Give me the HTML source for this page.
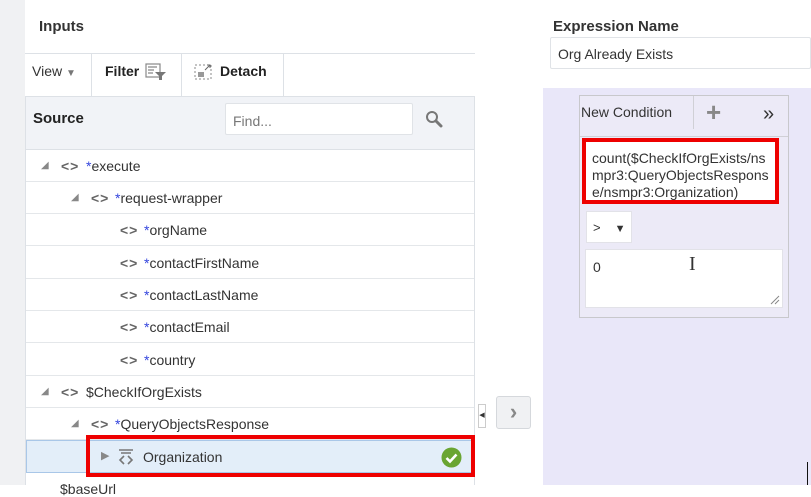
<!DOCTYPE html>
<html><head><meta charset="utf-8"><style>
*{margin:0;padding:0;box-sizing:border-box}
body{width:811px;height:485px;overflow:hidden;background:#fff;font-family:"Liberation Sans",Arial,sans-serif;color:#333;position:relative}
.a{position:absolute}
.row{position:absolute;left:26px;width:448px;height:32px;border-bottom:1px solid #e4e7ea;font-size:14px;line-height:32px;color:#333}
.row span{position:absolute;white-space:nowrap}
.tri{color:#888;font-size:10px}
.ic{color:#666;font-size:14px;letter-spacing:1px;font-weight:bold}
.st{color:#3344dd}
</style></head><body>
<div class="a" style="left:0;top:0;width:25px;height:485px;background:#f0f1f3"></div>
<div class="a" style="left:39px;top:18px;font-size:15px;font-weight:bold;color:#333">Inputs</div>
<div class="a" style="left:25px;top:53px;width:450px;height:1px;background:#dde1e6"></div>
<div class="a" style="left:32px;top:63px;font-size:14px;color:#333">View <span style="font-size:10px;color:#777">▼</span></div>
<div class="a" style="left:91px;top:54px;width:1px;height:42px;background:#dde1e6"></div>
<div class="a" style="left:105px;top:63px;font-size:14px;font-weight:bold;color:#222">Filter</div>
<svg class="a" style="left:145px;top:63px" width="22" height="18" viewBox="0 0 22 18"><g stroke="#888" fill="none" stroke-width="1.2"><rect x="1" y="1" width="14" height="13"/><path d="M3 4h9M3 7h6M3 10h5"/></g><path d="M10 9h11l-4 4v4h-3v-4z" fill="#777"/></svg>
<div class="a" style="left:181px;top:54px;width:1px;height:42px;background:#dde1e6"></div>
<svg class="a" style="left:194px;top:63px" width="20" height="18" viewBox="0 0 20 18"><rect x="1" y="2" width="16" height="14" fill="none" stroke="#888" stroke-dasharray="2 2"/><rect x="4" y="9" width="6" height="5" fill="#999"/><path d="M11 7l5-5M13 2h3v3" stroke="#666" fill="none"/></svg>
<div class="a" style="left:220px;top:63px;font-size:14px;font-weight:bold;color:#222">Detach</div>
<div class="a" style="left:283px;top:54px;width:1px;height:42px;background:#dde1e6"></div>
<div class="a" style="left:25px;top:96px;width:450px;height:389px;border:1px solid #dde1e6;border-bottom:none"></div>
<div class="a" style="left:26px;top:97px;width:448px;height:53px;background:#f1f3f7;border-bottom:1px solid #dde1e6"></div>
<div class="a" style="left:33px;top:110px;font-size:15px;font-weight:bold;color:#222">Source</div>
<div class="a" style="left:225px;top:103px;width:188px;height:32px;background:#fff;border:1px solid #e0e3e7;border-radius:2px;font-size:14px;color:#777;padding:9px 0 0 7px">Find...</div>
<svg class="a" style="left:425px;top:110px" width="18" height="18" viewBox="0 0 18 18"><circle cx="7" cy="7" r="5" fill="none" stroke="#777" stroke-width="2"/><path d="M11 11l5 5" stroke="#777" stroke-width="3" stroke-linecap="round"/></svg>

<div class="row" style="top:150px"><span class="tri" style="left:15px">◢</span><span class="ic" style="left:35px">&lt;&gt;</span><span style="left:60px"><span class="st" style="position:static">*</span>execute</span></div>
<div class="row" style="top:182px"><span class="tri" style="left:45px">◢</span><span class="ic" style="left:65px">&lt;&gt;</span><span style="left:89px"><span class="st" style="position:static">*</span>request-wrapper</span></div>
<div class="row" style="top:214px"><span class="ic" style="left:94px">&lt;&gt;</span><span style="left:118px"><span class="st" style="position:static">*</span>orgName</span></div>
<div class="row" style="top:247px"><span class="ic" style="left:94px">&lt;&gt;</span><span style="left:118px"><span class="st" style="position:static">*</span>contactFirstName</span></div>
<div class="row" style="top:279px"><span class="ic" style="left:94px">&lt;&gt;</span><span style="left:118px"><span class="st" style="position:static">*</span>contactLastName</span></div>
<div class="row" style="top:311px"><span class="ic" style="left:94px">&lt;&gt;</span><span style="left:118px"><span class="st" style="position:static">*</span>contactEmail</span></div>
<div class="row" style="top:344px"><span class="ic" style="left:94px">&lt;&gt;</span><span style="left:118px"><span class="st" style="position:static">*</span>country</span></div>
<div class="row" style="top:376px"><span class="tri" style="left:15px">◢</span><span class="ic" style="left:35px">&lt;&gt;</span><span style="left:60px">$CheckIfOrgExists</span></div>
<div class="row" style="top:408px"><span class="tri" style="left:45px">◢</span><span class="ic" style="left:65px">&lt;&gt;</span><span style="left:89px"><span class="st" style="position:static">*</span>QueryObjectsResponse</span></div>
<div class="a" style="left:26px;top:440px;width:448px;height:33px;background:#e3eef9;border:1px solid #a9c7e8"></div>
<div class="a" style="left:101px;top:449px;font-size:11px;color:#888">▶</div>
<svg class="a" style="left:117px;top:448px" width="18" height="18" viewBox="0 0 18 18"><g stroke="#777" fill="none" stroke-width="1.6"><path d="M2 2h14M4 5h10"/><path d="M7 8l-4 4 4 4M11 8l4 4-4 4"/></g></svg>
<div class="a" style="left:143px;top:449px;font-size:14px;color:#333">Organization</div>
<svg class="a" style="left:441px;top:447px" width="21" height="21" viewBox="0 0 21 21"><circle cx="10.5" cy="10.5" r="10" fill="#6aa532"/><path d="M5.5 11l3.5 3.5 6.5-7" stroke="#fff" stroke-width="2.6" fill="none"/></svg>
<div class="a" style="left:86px;top:435px;width:389px;height:42px;border:4px solid #e00"></div>
<div class="a" style="left:60px;top:481px;font-size:14px;color:#333">$baseUrl</div>
<div class="a" style="left:478px;top:404px;width:8px;height:24px;background:#fff;border:1px solid #ccc;font-size:7px;line-height:22px;text-align:center">◀</div>
<div class="a" style="left:496px;top:396px;width:35px;height:33px;background:#f0f1f3;border:1px solid #d5d8dc;border-radius:3px;color:#888;font-size:22px;font-weight:bold;text-align:center;line-height:30px">›</div>
<div class="a" style="left:553px;top:18px;font-size:15px;font-weight:bold;color:#333">Expression Name</div>
<div class="a" style="left:550px;top:37px;width:261px;height:32px;background:#fff;border:1px solid #e0e3e7;border-radius:2px;font-size:14px;color:#333;padding:8px 0 0 7px">Org Already Exists</div>
<div class="a" style="left:543px;top:88px;width:268px;height:397px;background:#e9e7f9"></div>
<div class="a" style="left:579px;top:95px;width:210px;height:223px;background:#eceaf7;border:1px solid #c8c8cc"></div>
<div class="a" style="left:580px;top:136px;width:208px;height:1px;background:#d0d0d6"></div>
<div class="a" style="left:693px;top:96px;width:1px;height:33px;background:#d0d0d6"></div>
<div class="a" style="left:581px;top:104px;font-size:14px;color:#333">New Condition</div>
<div class="a" style="left:706px;top:97px;font-size:26px;font-weight:bold;color:#888">+</div>
<div class="a" style="left:763px;top:103px;font-size:20px;color:#333">»</div>
<div class="a" style="left:582px;top:138px;width:197px;height:66px;background:#fff;border:4px solid #e00"></div>
<div class="a" style="left:592px;top:150px;width:182px;font-size:14px;line-height:17px;color:#333;word-break:break-all;overflow-wrap:anywhere">count($CheckIfOrgExists/nsmpr3:QueryObjectsResponse/nsmpr3:Organization)</div>
<div class="a" style="left:586px;top:211px;width:46px;height:32px;background:#fff;border:1px solid #e2e2e8;font-size:13px;color:#333;padding:8px 0 0 6px">&gt;<span style="margin-left:14px;font-size:11px">▼</span></div>
<div class="a" style="left:585px;top:249px;width:198px;height:59px;background:#fff;border:1px solid #e2e2e8;font-size:14px;color:#333;padding:9px 0 0 7px">0</div>
<div class="a" style="left:689px;top:253px;font-size:20px;font-family:'Liberation Serif',serif;color:#333">I</div>
<svg class="a" style="left:770px;top:295px" width="10" height="10"><path d="M1 9l8-8M5 9l4-4" stroke="#888"/></svg>
<div class="a" style="left:807px;top:462px;width:1px;height:23px;background:#111"></div>
</body></html>
